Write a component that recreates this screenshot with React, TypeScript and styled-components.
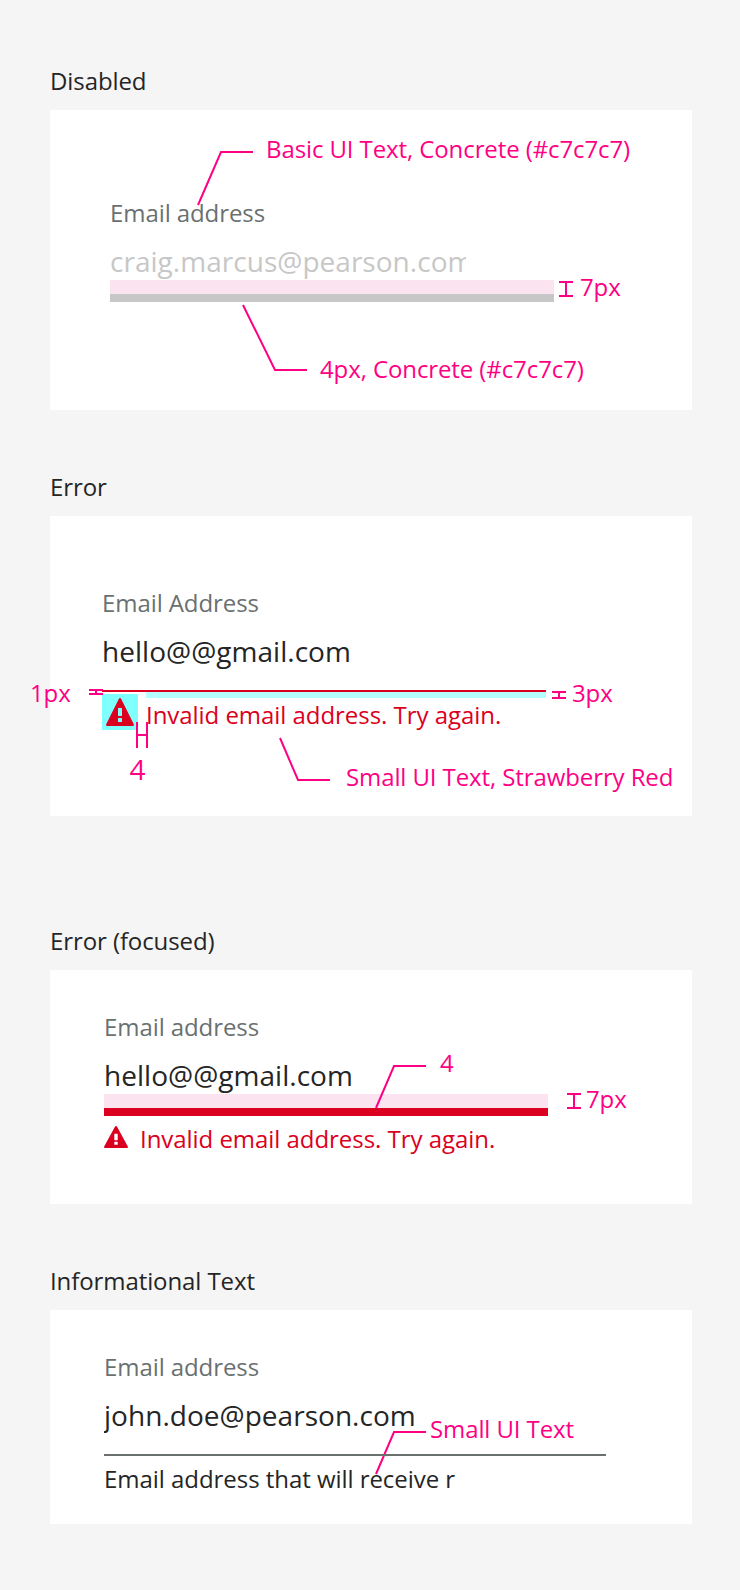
import React from "react";
import styled, { createGlobalStyle } from "styled-components";

const color = {
  page: "#f5f5f5",
  ink: "#252525",
  label: "#6a7070",
  concrete: "#c7c7c7",
  error: "#db0020",
  note: "#ff0084",
  band: "#fbe4f0",
};

const GlobalStyle = createGlobalStyle`
  body {
    margin: 0;
    background: ${color.page};
    font-family: "Open Sans", "Noto Sans", sans-serif;
    color: ${color.ink};
  }
`;

const Page = styled.main`
  box-sizing: border-box;
  width: 740px;
  height: 1590px;
  padding: 65px 48px 0 50px;
  overflow: hidden;
  background: ${color.page};
`;

const Section = styled.section<{ $after?: number }>`
  margin-bottom: ${(p) => p.$after ?? 61}px;
`;

const Title = styled.h2`
  margin: 0 0 13px;
  font-size: 24px;
  font-weight: 400;
  line-height: 32px;
  letter-spacing: -0.09px;
`;

const Panel = styled.div<{ $height: number; $top: number; $left: number }>`
  position: relative;
  box-sizing: border-box;
  height: ${(p) => p.$height}px;
  padding: ${(p) => p.$top}px 0 0 ${(p) => p.$left}px;
  background: #fff;
`;

const Field = styled.div<{ $width?: number }>`
  display: flex;
  flex-direction: column;
  width: ${(p) => p.$width ?? 444}px;
`;

const Label = styled.label`
  margin-bottom: 13px;
  font-size: 24px;
  line-height: 32px;
  letter-spacing: -0.08px;
  color: ${color.label};
`;

const Value = styled.div<{ $disabled?: boolean; $clip?: number }>`
  width: ${(p) => (p.$clip ? `${p.$clip}px` : "auto")};
  overflow: hidden;
  white-space: nowrap;
  font-size: 28px;
  line-height: 38px;
  letter-spacing: 0.03px;
  color: ${(p) => (p.$disabled ? color.concrete : color.ink)};
`;

const SpacingBand = styled.div`
  height: 14px;
  background: ${color.band};
`;

const Underline = styled.div<{ $color: string; $thick?: boolean }>`
  position: relative;
  height: ${(p) => (p.$thick ? 8 : 2)}px;
  margin-top: ${(p) => (p.$thick ? 0 : 20)}px;
  background: ${(p) => p.$color};
`;

const UnderlineGap = styled.span`
  position: absolute;
  top: 2px;
  left: 44px;
  right: 0;
  height: 6px;
  background: #b3ffff;
`;

const Message = styled.div<{ $error?: boolean; $gap?: number; $top?: number }>`
  display: flex;
  align-items: flex-start;
  gap: ${(p) => p.$gap ?? 0}px;
  margin-top: ${(p) => p.$top ?? 7}px;
  color: ${(p) => (p.$error ? color.error : color.ink)};
`;

const MessageText = styled.span<{ $drop?: number }>`
  margin-top: ${(p) => p.$drop ?? 0}px;
  white-space: nowrap;
  font-size: 24px;
  line-height: 32px;
  letter-spacing: -0.045px;
`;

const IconBox = styled.span`
  display: flex;
  align-items: center;
  justify-content: center;
  width: 36px;
  height: 36px;
  background: #80ffff;
`;

const IconSlot = styled.span`
  display: flex;
  padding-top: 3px;
`;

const Note = styled.span<{ $x: number; $y: number; $large?: boolean }>`
  position: absolute;
  left: ${(p) => p.$x}px;
  top: ${(p) => p.$y}px;
  white-space: nowrap;
  font-size: ${(p) => (p.$large ? 28 : 24)}px;
  line-height: ${(p) => (p.$large ? 38 : 32)}px;
  letter-spacing: -0.1px;
  color: ${color.note};
`;

const Marks = styled.svg`
  position: absolute;
  inset: 0;
  width: 100%;
  height: 100%;
  overflow: visible;
  fill: none;
  stroke: ${color.note};
  stroke-width: 2;
  pointer-events: none;
`;

const Front = styled.div`
  position: relative;
  z-index: 1;
`;

const WarningIcon = ({ width, height }: { width: number; height: number }) => (
  <svg width={width} height={height} viewBox="0 0 28 28" preserveAspectRatio="none" fill="currentColor" color={color.error}>
    <path
      fillRule="evenodd"
      d="M12.9.7Q14-.7 15.1.7L27.8 26.2Q28.4 28 26.8 28H1.2Q-.4 28 .2 26.2ZM12.6 10Q12 10 12 10.6V17.4Q12 18 12.6 18H15.4Q16 18 16 17.4V10.6Q16 10 15.4 10ZM12.6 20Q12 20 12 20.6V23.4Q12 24 12.6 24H15.4Q16 24 16 23.4V20.6Q16 20 15.4 20Z"
    />
  </svg>
);

export default function App() {
  return (
    <>
      <GlobalStyle />
      <Page>
        <Section>
          <Title>Disabled</Title>
          <Panel $height={300} $top={87} $left={60}>
            <Field>
              <Label>Email address</Label>
              <Value $disabled $clip={356}>craig.marcus@pearson.com</Value>
              <SpacingBand />
              <Underline $color={color.concrete} $thick />
            </Field>
            <Marks>
              <path d="M148 95L171 42H203" />
              <path d="M193 195L225 260H257" />
              <path d="M509 172H523M509 186H523M516 172V186" />
            </Marks>
            <Note $x={216} $y={23}>Basic UI Text, Concrete (#c7c7c7)</Note>
            <Note $x={530} $y={161}>7px</Note>
            <Note $x={270} $y={243}>4px, Concrete (#c7c7c7)</Note>
          </Panel>
        </Section>

        <Section $after={109}>
          <Title>Error</Title>
          <Panel $height={300} $top={71} $left={52}>
            <Field>
              <Label>Email Address</Label>
              <Value>hello@@gmail.com</Value>
              <Underline $color={color.error}>
                <UnderlineGap />
              </Underline>
              <Message $error $gap={8} $top={2}>
                <IconBox>
                  <WarningIcon width={28} height={28} />
                </IconBox>
                <MessageText $drop={5}>Invalid email address. Try again.</MessageText>
              </Message>
            </Field>
            <Marks>
              <path d="M39 174H53M39 178H53M46 174V178" />
              <path d="M502 176H516M502 182H516M509 176V182" />
              <path d="M87 206V232M97 206V232M87 219H97" />
              <path d="M230 222L248 264H280" />
            </Marks>
            <Note $x={-20} $y={161}>1px</Note>
            <Note $x={522} $y={161}>3px</Note>
            <Note $x={79.6} $y={234} $large>4</Note>
            <Note $x={296} $y={245}>Small UI Text, Strawberry Red</Note>
          </Panel>
        </Section>

        <Section>
          <Title>Error (focused)</Title>
          <Panel $height={234} $top={41} $left={54}>
            <Field>
              <Label>Email address</Label>
              <Value>hello@@gmail.com</Value>
              <SpacingBand />
              <Underline $color={color.error} $thick />
              <Message $error $gap={12}>
                <IconSlot>
                  <WarningIcon width={24} height={22} />
                </IconSlot>
                <MessageText>Invalid email address. Try again.</MessageText>
              </Message>
            </Field>
            <Marks>
              <path d="M326 138L344 96H376" />
              <path d="M517 124H531M517 138H531M524 124V138" />
            </Marks>
            <Note $x={390} $y={77}>4</Note>
            <Note $x={536} $y={113}>7px</Note>
          </Panel>
        </Section>

        <Section $after={0}>
          <Title>Informational Text</Title>
          <Panel $height={214} $top={41} $left={54}>
            <Marks>
              <path d="M326 164L344 122H376" />
            </Marks>
            <Front>
              <Field $width={502}>
                <Label>Email address</Label>
                <Value>john.doe@pearson.com</Value>
                <Underline $color={color.label} />
                <Message>
                  <MessageText>Email address that will receive r</MessageText>
                </Message>
              </Field>
            </Front>
            <Note $x={380} $y={103}>Small UI Text</Note>
          </Panel>
        </Section>
      </Page>
    </>
  );
}
